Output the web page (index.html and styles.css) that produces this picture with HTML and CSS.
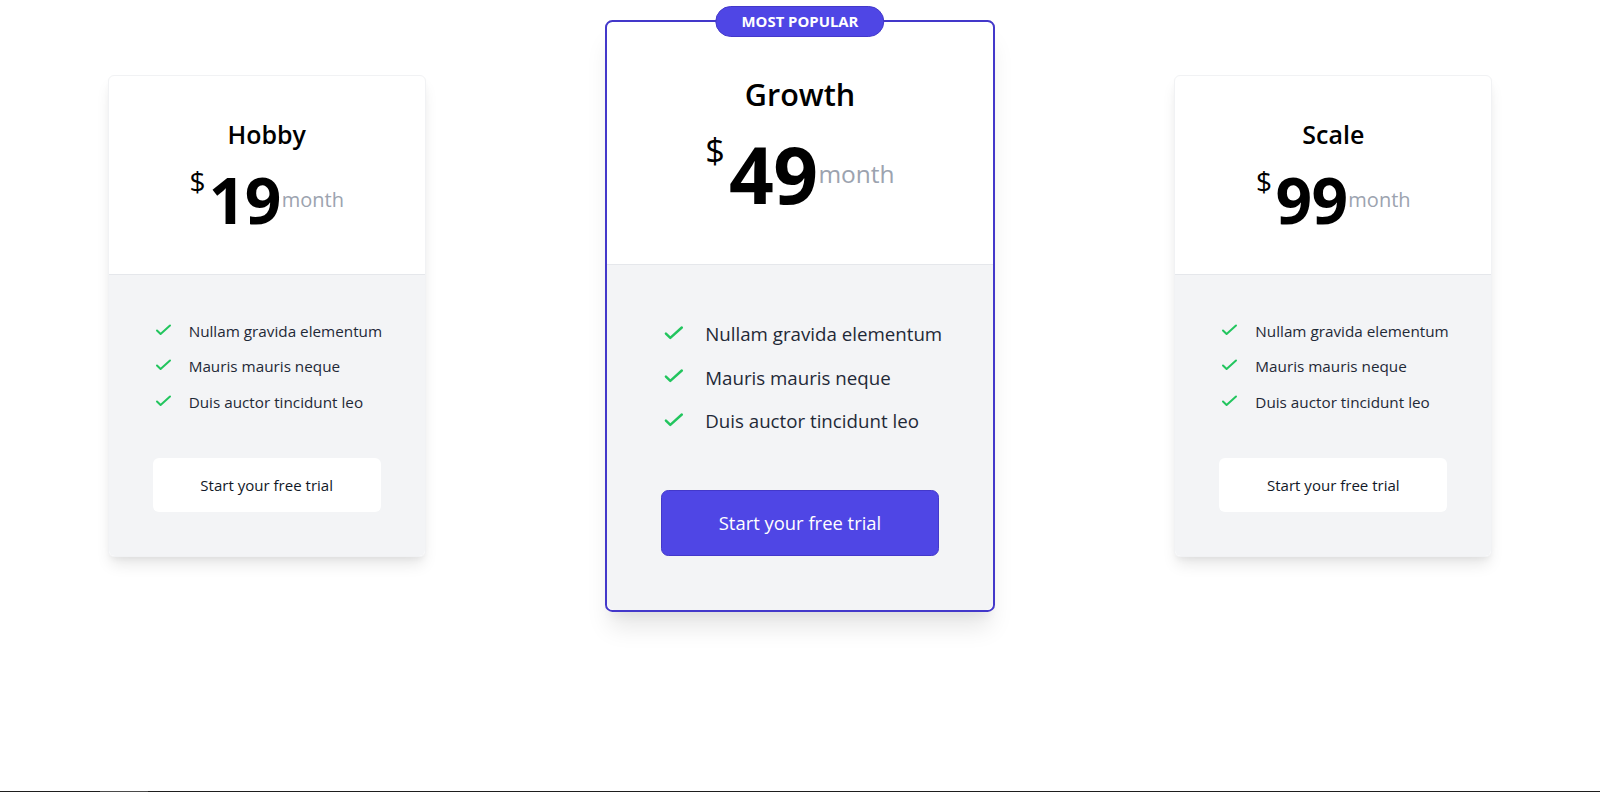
FILE: index.html
```html
<!DOCTYPE html>
<html lang="en">
<head>
<meta charset="utf-8">
<title>Pricing</title>
<link rel="stylesheet" href="styles.css">
</head>
<body>
<div class="page">
  <main class="plans">
    <section class="card">
      <header class="card-head">
        <h2 class="plan-name">Hobby</h2>
        <div class="price"><span class="cur">$</span><span class="amount">19</span><span class="per">month</span></div>
      </header>
      <div class="card-body">
        <ul class="features">
          <li><svg class="check" viewBox="0 0 20 20"><path d="M4 9.5 L7.6 13 L17 4.5"/></svg><span>Nullam gravida elementum</span></li>
          <li><svg class="check" viewBox="0 0 20 20"><path d="M4 9.5 L7.6 13 L17 4.5"/></svg><span>Mauris mauris neque</span></li>
          <li><svg class="check" viewBox="0 0 20 20"><path d="M4 9.5 L7.6 13 L17 4.5"/></svg><span>Duis auctor tincidunt leo</span></li>
        </ul>
        <a class="btn" href="#"><span class="btn-label">Start your free trial</span></a>
      </div>
    </section>

    <section class="card featured">
      <span class="badge">Most popular</span>
      <header class="card-head">
        <h2 class="plan-name">Growth</h2>
        <div class="price"><span class="cur">$</span><span class="amount">49</span><span class="per">month</span></div>
      </header>
      <div class="card-body">
        <ul class="features">
          <li><svg class="check" viewBox="0 0 20 20"><path d="M4 9.5 L7.6 13 L17 4.5"/></svg><span>Nullam gravida elementum</span></li>
          <li><svg class="check" viewBox="0 0 20 20"><path d="M4 9.5 L7.6 13 L17 4.5"/></svg><span>Mauris mauris neque</span></li>
          <li><svg class="check" viewBox="0 0 20 20"><path d="M4 9.5 L7.6 13 L17 4.5"/></svg><span>Duis auctor tincidunt leo</span></li>
        </ul>
        <a class="btn btn-primary" href="#"><span class="btn-label">Start your free trial</span></a>
      </div>
    </section>

    <section class="card">
      <header class="card-head">
        <h2 class="plan-name">Scale</h2>
        <div class="price"><span class="cur">$</span><span class="amount">99</span><span class="per">month</span></div>
      </header>
      <div class="card-body">
        <ul class="features">
          <li><svg class="check" viewBox="0 0 20 20"><path d="M4 9.5 L7.6 13 L17 4.5"/></svg><span>Nullam gravida elementum</span></li>
          <li><svg class="check" viewBox="0 0 20 20"><path d="M4 9.5 L7.6 13 L17 4.5"/></svg><span>Mauris mauris neque</span></li>
          <li><svg class="check" viewBox="0 0 20 20"><path d="M4 9.5 L7.6 13 L17 4.5"/></svg><span>Duis auctor tincidunt leo</span></li>
        </ul>
        <a class="btn" href="#"><span class="btn-label">Start your free trial</span></a>
      </div>
    </section>
  </main>
  <div class="bottom-line"></div>
</div>
</body>
</html>
```

FILE: styles.css
```css
* { box-sizing: border-box; }

html, body {
  margin: 0;
  padding: 0;
  background: #ffffff;
  font-family: "Open Sans", "Noto Sans", "Liberation Sans", sans-serif;
  color: #000;
}

.page {
  height: 100vh;
  display: flex;
  flex-direction: column;
}

.plans {
  flex: 1;
  display: grid;
  grid-template-columns: repeat(3, 1fr);
  align-items: center;
  justify-items: center;
  align-content: start;
  padding-top: 20px;
}

.card {
  font-size: 16px;
  width: 19.875em;
  position: relative;
  display: flex;
  flex-direction: column;
  background: #fff;
  border: 1px solid #f1f2f4;
  border-radius: 0.375em;
  box-shadow: 0 10px 15px -3px rgba(0, 0, 0, 0.1), 0 4px 6px -2px rgba(0, 0, 0, 0.05);
}

.card.featured {
  font-size: 19.6px;
  border: 2px solid #4338ca;
  box-shadow: 0 20px 25px -5px rgba(0, 0, 0, 0.1), 0 10px 10px -5px rgba(0, 0, 0, 0.04);
}

.badge {
  position: absolute;
  top: -1.05em;
  left: 50%;
  transform: translateX(-50%);
  font-size: 0.76em;
  font-weight: 700;
  text-transform: uppercase;
  color: #fff;
  background: #4f46e5;
  border: 1px solid #4338ca;
  border-radius: 999px;
  line-height: 1.9em;
  padding: 0 1.7em;
  white-space: nowrap;
}

.card-head {
  display: flex;
  flex-direction: column;
  align-items: center;
  padding: 2.72em 0 2.62em;
  border-radius: 0.375em 0.375em 0 0;
}

.plan-name {
  margin: 0;
  font-size: 1.56em;
  line-height: 1.28;
  font-weight: 600;
  color: #000;
}

.price {
  margin-top: 1.03em;
  height: 4em;
  display: flex;
  justify-content: center;
  align-items: center;
}

.cur {
  align-self: flex-start;
  font-size: 1.75em;
  line-height: 1;
  margin-top: -0.04em;
  margin-right: 0.12em;
  font-weight: 500;
}

.amount {
  font-size: 4em;
  line-height: 1;
  font-weight: 700;
  letter-spacing: -0.01em;
}

.per {
  font-size: 1.25em;
  line-height: 1;
  color: #9ca3af;
  margin-left: 0.05em;
}

.card-body {
  background: #f3f4f6;
  border-top: 1px solid #e5e7eb;
  padding: 2.75em;
  border-radius: 0 0 0.375em 0.375em;
}

.features {
  list-style: none;
  margin: 0;
  padding: 0;
}

.features li {
  display: flex;
  align-items: center;
  height: 1.5em;
  gap: 1em;
  font-size: 1em;
  color: #1f2937;
  white-space: nowrap;
}

.features li + li {
  margin-top: 0.72em;
}

.features li span {
  font-size: 0.955em;
}

.check {
  width: 1.25em;
  height: 1.25em;
  flex: none;
  fill: none;
  stroke: #22c55e;
  stroke-width: 2;
  stroke-linecap: round;
  stroke-linejoin: round;
}

.btn {
  margin-top: 2.75em;
  height: 3.375em;
  display: flex;
  align-items: center;
  justify-content: center;
  background: #fff;
  color: #111827;
  text-decoration: none;
  border-radius: 0.375em;
}

.btn-label {
  font-size: 0.94em;
}

.btn-primary {
  background: #4f46e5;
  border: 1px solid #4338ca;
  color: #fff;
}

.bottom-line {
  height: 1px;
  flex: none;
  background: linear-gradient(to right, #1e1e1e 0, #1e1e1e 100px, #4a4a4a 100px, #4a4a4a 148px, #1e1e1e 148px);
}
```
